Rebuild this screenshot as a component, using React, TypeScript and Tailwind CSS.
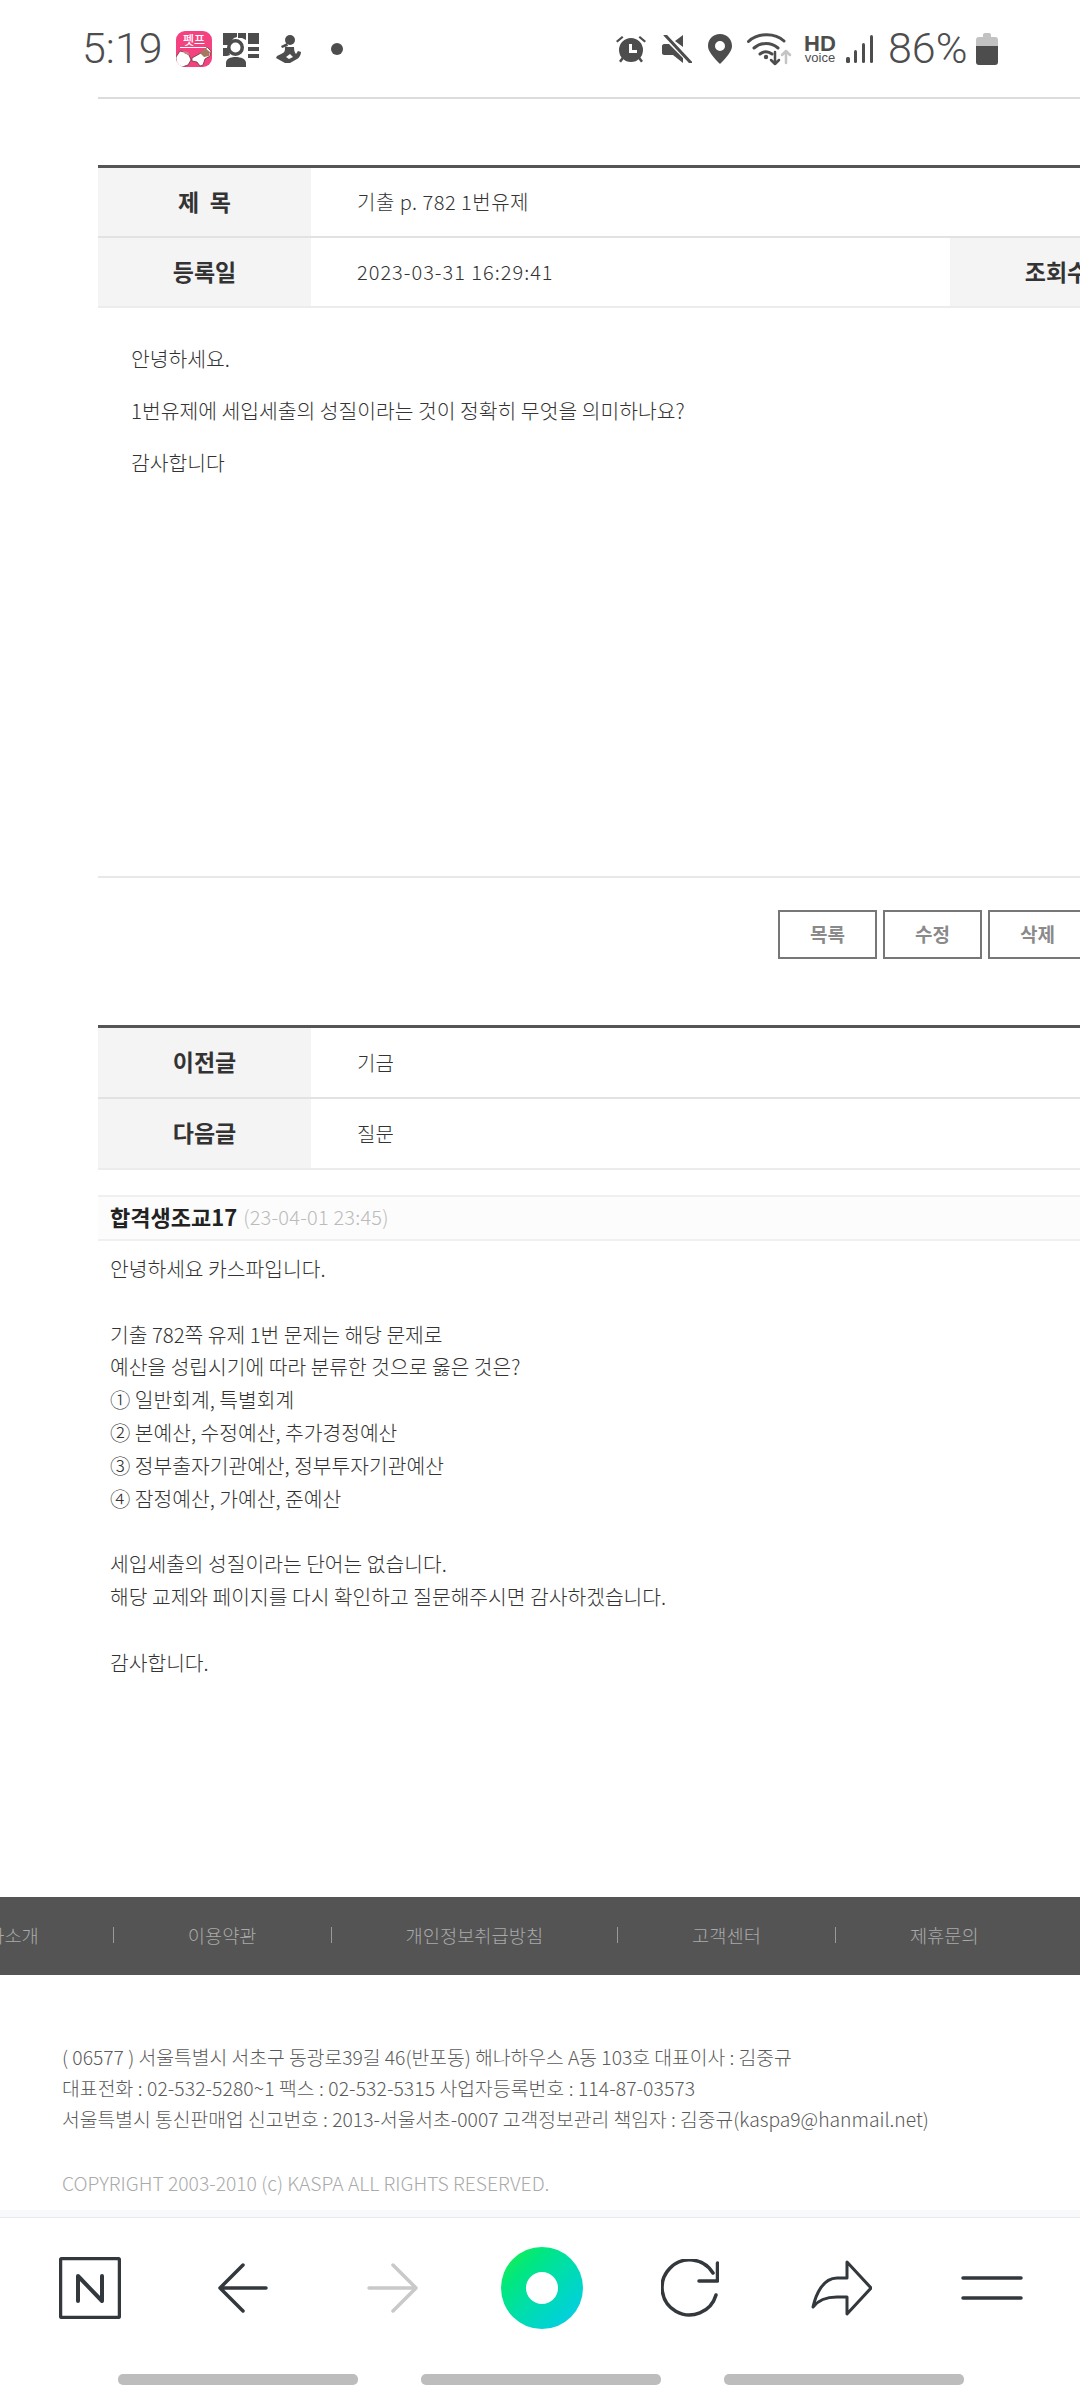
const kr = "font-['Noto_Sans_CJK_KR','Noto_Sans',sans-serif]";

const PetIcon = () => (
  <div className="relative w-[36px] h-[36px] rounded-[9px] overflow-hidden bg-[#f4417f] text-center">
    <div className={`${kr} text-[12px] leading-[14px] pt-[2px] font-medium text-white`}>펫프</div>
    <svg viewBox="0 0 36 36" className="absolute inset-0 w-[36px] h-[36px]">
      <path d="M4 16.5h28" stroke="#fff" strokeWidth="1" />
      <path d="M0 26l4-6 4 1 5 3 2 5-3 5-6 2-6-1z" fill="#fff" stroke="#5a2a2a" strokeWidth="0.7" />
      <path d="M7 20l5 1 2 3-5-1z" fill="#c98a86" />
      <path d="M16 27l9-5 4-3 2-3 4 4-1 5-5 3-2 6-3 1-3-4-5-1z" fill="#fff" stroke="#5a2a2a" strokeWidth="0.7" />
      <path d="M24 22l5-5 5 4-1 4-5 1z" fill="#a5785f" />
    </svg>
  </div>
);

const PhotoGridIcon = () => (
  <svg viewBox="0 0 36 34" className="w-[36px] h-[34px] ml-[11px] mt-[3px]" fill="#4d4d4d">
    <path d="M0 0h14v4l-3 1-4 4-1 3H0zM15 0h8v7l-4-2-4 0zM25 0h11v11H25zM0 15h5l1 4 1 3-3 1H0zM25 14h11v4H25zM25 21h11v4H25z" />
    <path fillRule="evenodd" d="M12.500 6a8.500 8.500 0 1 1 0 17 8.500 8.500 0 0 1 0-17zm0 3.500a5 5 0 1 0 0 10 5 5 0 0 0 0-10z" />
    <path d="M3 34v-4c0-4 4-6 9.500-6s10.500 2 10.500 6v4z" />
  </svg>
);

const YogaIcon = () => (
  <svg viewBox="0 0 26 28" className="w-[26px] h-[28px] ml-[17px] mt-[1px]" fill="#4d4d4d">
    <circle cx="14" cy="5" r="5" />
    <path d="M11 8L5 11l1 2 6-2z" />
    <path d="M9 12h9c0 4 1 6 2 7l2-3 3 1c0 3-2 6-4 7l-7 4H9l-9-5 1-2 6-3c2-1 2-3 2-6zm1 10l3 2 4-2-3-3z" fillRule="evenodd" />
  </svg>
);

const AlarmIcon = () => (
  <svg viewBox="0 0 30 28" className="w-[30px] h-[28px]" fill="#4d4d4d">
    <path d="M0 6l6-5 1.500 1.500-6 5zM30 6l-6-5-1.500 1.500 6 5z" />
    <path d="M3 26l3-4 2 1.500-3 4zM27 26l-3-4-2 1.500 3 4z" />
    <path fillRule="evenodd" d="M15 3a12 12 0 1 1 0 24 12 12 0 0 1 0-24zm-2 6v9h8v-3h-5V9z" />
  </svg>
);

const MuteIcon = () => (
  <svg viewBox="0 0 30 28" className="w-[30px] h-[28px] ml-[16px]" fill="#4d4d4d">
    <path d="M21 0v12L13 6zM0 11c0-1 1-2 2-2h5l14 14v5L11 20H2c-1 0-2-1-2-2z" />
    <path d="M3 0l26 28" stroke="#4d4d4d" strokeWidth="3" strokeLinecap="round" />
  </svg>
);

const PinIcon = () => (
  <svg viewBox="0 0 24 30" className="w-[24px] h-[30px] ml-[16px]" fill="#4d4d4d">
    <path fillRule="evenodd" d="M12 0c7 0 12 5 12 12 0 5-5 11-12 18C5 23 0 17 0 12 0 5 5 0 12 0zm0 7a5 5 0 1 0 0 10 5 5 0 0 0 0-10z" />
  </svg>
);

const WifiIcon = () => (
  <svg viewBox="0 0 46 34" className="w-[46px] h-[34px] ml-[15px]" fill="none">
    <path d="M1.500 9.500C11 .5 28 .5 37 9" stroke="#4d4d4d" strokeWidth="3" strokeLinecap="round" />
    <path d="M7 16c7-6 17-6 24 0" stroke="#4d4d4d" strokeWidth="3" strokeLinecap="round" />
    <path d="M13 22c4-3 8-3 12 0" stroke="#4d4d4d" strokeWidth="3" strokeLinecap="round" />
    <circle cx="19" cy="25" r="2.200" fill="#4d4d4d" />
    <path d="M28 20v12M24 28l4 4 4-4" stroke="#4d4d4d" strokeWidth="2.500" strokeLinecap="round" strokeLinejoin="round" />
    <path d="M39 31V19M35 23l4-4 4 4" stroke="#c4c4c4" strokeWidth="2.500" strokeLinecap="round" strokeLinejoin="round" />
  </svg>
);

const HdVoice = () => (
  <div className="ml-[11px] w-[32px] flex flex-col items-center font-['Liberation_Sans',sans-serif] text-[#4d4d4d]">
    <span className="text-[22px] leading-[17px] font-bold">HD</span>
    <span className="text-[13px] leading-[11px]">voice</span>
  </div>
);

const SignalIcon = () => (
  <svg viewBox="0 0 27 28" className="w-[27px] h-[28px] ml-[10px]" fill="#4d4d4d">
    <rect x="0" y="22" width="4" height="6" rx="1.500" />
    <rect x="8" y="15" width="3" height="13" rx="1.500" />
    <rect x="16" y="8" width="3" height="20" rx="1.500" />
    <rect x="24" y="0" width="3" height="28" rx="1.500" />
  </svg>
);

const BatteryIcon = () => (
  <svg viewBox="0 0 22 32" className="w-[22px] h-[32px] ml-[8px] mt-[1px]">
    <path d="M7 2c0-1 .5-2 2-2h4c1.500 0 2 1 2 2v2h4c2 0 3 1 3 3v6H0V7c0-2 1-3 3-3h4z" fill="#c2c2c2" />
    <path d="M0 13h22v16c0 2-1 3-3 3H3c-2 0-3-1-3-3z" fill="#4d4d4d" />
  </svg>
);

const StatusBar = () => (
  <div className="h-[97px] pl-[82px] flex items-center">
    <span className="font-['Roboto',sans-serif] font-light text-[43px] leading-none text-[#4d4d4d] w-[94px]">5:19</span>
    <PetIcon />
    <PhotoGridIcon />
    <YogaIcon />
    <span className="w-[12px] h-[12px] rounded-full bg-[#4d4d4d] ml-[29px]" />
    <span className="ml-[273px]" />
    <AlarmIcon />
    <MuteIcon />
    <PinIcon />
    <WifiIcon />
    <HdVoice />
    <SignalIcon />
    <span className="font-['Roboto',sans-serif] font-light text-[43px] leading-none text-[#4d4d4d] ml-[15px]">86%</span>
    <BatteryIcon />
  </div>
);

const Th = ({ children }: { children: string }) => (
  <div className="w-[213px] shrink-0 h-full pb-[2px] bg-[#f4f4f4] flex items-center justify-center whitespace-pre text-[23px] font-bold text-[#333]">
    {children}
  </div>
);

const NextRow = ({ label, value, last }: { label: string; value: string; last?: boolean }) => (
  <div className={`h-[71px] flex ${last ? "border-b-2 border-[#ececec]" : "border-b-2 border-[#e2e2e2]"}`}>
    <Th>{label}</Th>
    <div className="pl-[46px] flex items-center text-[20px] font-light text-[#333]">{value}</div>
  </div>
);

const Btn = ({ children }: { children: string }) => (
  <div className="w-[99px] h-[49px] border-2 border-[#777] flex items-center justify-center text-[19px] font-bold text-[#8a8a8a]">
    {children}
  </div>
);

const comment = [
  "안녕하세요 카스파입니다.",
  "",
  "기출 782쪽 유제 1번 문제는 해당 문제로",
  "예산을 성립시기에 따라 분류한 것으로 옳은 것은?",
  "① 일반회계, 특별회계",
  "② 본예산, 수정예산, 추가경정예산",
  "③ 정부출자기관예산, 정부투자기관예산",
  "④ 잠정예산, 가예산, 준예산",
  "",
  "세입세출의 성질이라는 단어는 없습니다.",
  "해당 교제와 페이지를 다시 확인하고 질문해주시면 감사하겠습니다.",
  "",
  "감사합니다.",
];

const navItems = ["회사소개", "이용약관", "개인정보취급방침", "고객센터", "제휴문의"];

const Toolbar = () => (
  <div className="h-[190px] bg-white">
    <div className="h-[8px] bg-[#f8f9fb] border-b border-[#e8eaee]" />
    <div className="h-[140px] flex items-center pl-[59px]">
      <svg viewBox="0 0 62 62" className="w-[62px] h-[62px]" fill="none" stroke="#33383d" strokeLinecap="round" strokeLinejoin="round">
        <rect x="1.500" y="1.500" width="59" height="59" rx="2" strokeWidth="3.500" />
        <path d="M19 44V19l24 25V19" strokeWidth="4" />
      </svg>
      <svg viewBox="0 0 50 50" className="w-[50px] h-[50px] ml-[97px]" fill="none" stroke="#33383d" strokeWidth="3.500" strokeLinecap="round" strokeLinejoin="round">
        <path d="M25 2L2 25l23 23M2 25h46" />
      </svg>
      <svg viewBox="0 0 51 50" className="w-[51px] h-[50px] ml-[99px]" fill="none" stroke="#c8c9ca" strokeWidth="3.500" strokeLinecap="round" strokeLinejoin="round">
        <path d="M26 2l23 23-23 23M49 25H2" />
      </svg>
      <div className="w-[82px] h-[82px] ml-[83px] rounded-full bg-gradient-to-br from-[#1cf02f] to-[#17c8f0] flex items-center justify-center">
        <div className="w-[32px] h-[32px] rounded-full bg-white" />
      </div>
      <svg viewBox="0 0 58 58" className="w-[58px] h-[58px] ml-[78px]" fill="none" stroke="#33383d" strokeWidth="3.500" strokeLinecap="round" strokeLinejoin="round">
        <path d="M55 36A27.500 27.500 0 1 1 52 14" />
        <path d="M56.500 4V22H38" />
      </svg>
      <svg viewBox="0 0 61 56" className="w-[61px] h-[56px] ml-[92px]" fill="none" stroke="#33383d" strokeWidth="3" strokeLinecap="round" strokeLinejoin="round">
        <path d="M36 2l24 26-24 26V37H26c-10 0-18 2-24 10 3-13 10-29 24-29h10z" />
      </svg>
      <svg viewBox="0 0 62 24" className="w-[62px] h-[24px] ml-[89px]" fill="none" stroke="#33383d" strokeWidth="3.500" strokeLinecap="round">
        <path d="M2 2h58M2 22h58" />
      </svg>
    </div>
    <div className="flex pl-[118px] gap-[63px] mt-[16px]">
      <div className="w-[240px] h-[11px] rounded-[5px] bg-[#bdbdbd]" />
      <div className="w-[240px] h-[11px] rounded-[5px] bg-[#bdbdbd]" />
      <div className="w-[240px] h-[11px] rounded-[5px] bg-[#bdbdbd]" />
    </div>
  </div>
);

export default function App() {
  return (
    <div className={`${kr} w-[1080px] h-[2400px] overflow-hidden bg-white flex flex-col`}>
      <StatusBar />
      <div className="ml-[98px] w-[1100px] h-[1800px] border-t-2 border-[#dcdcdc]">
        <div className="mt-[66px] border-t-[3px] border-[#555]">
          <div className="h-[70px] flex border-b-2 border-[#e2e2e2]">
            <Th>{"제  목"}</Th>
            <div className="pl-[46px] flex items-center text-[20px] tracking-[0.5px] font-light text-[#333]">기출 p. 782 1번유제</div>
          </div>
          <div className="h-[70px] flex border-b-2 border-[#ececec]">
            <Th>등록일</Th>
            <div className="w-[639px] pl-[46px] flex items-center text-[20px] tracking-[1px] font-light text-[#333]">2023-03-31 16:29:41</div>
            <Th>조회수</Th>
          </div>
        </div>
        <div className="h-[570px] pl-[33px] pt-[24px] border-b-2 border-[#e8e8e8] text-[20.4px] leading-[52px] font-light text-[#333]">
          <p>안녕하세요.</p>
          <p>1번유제에 세입세출의 성질이라는 것이 정확히 무엇을 의미하나요?</p>
          <p>감사합니다</p>
        </div>
        <div className="mt-[32px] ml-[680px] flex gap-[6px]">
          <Btn>목록</Btn>
          <Btn>수정</Btn>
          <Btn>삭제</Btn>
        </div>
        <div className="mt-[66px] border-t-[3px] border-[#555]">
          <NextRow label="이전글" value="기금" />
          <NextRow label="다음글" value="질문" last />
        </div>
        <div className="mt-[25px] h-[46px] pl-[12px] pb-[3px] flex items-center gap-[6px] bg-[#fcfcfc] border-y-2 border-[#f0f0f0]">
          <span className="text-[22px] font-bold text-[#222]">합격생조교17</span>
          <span className="text-[20px] tracking-[0.2px] font-light text-[#bbb]">(23-04-01 23:45)</span>
        </div>
        <div className="mt-[11px] pl-[12px] text-[20.35px] leading-[32.8px] font-light text-[#333]">
          {comment.map((line, i) => (
            <p key={i} className="h-[32.8px]">{line}</p>
          ))}
        </div>
      </div>
      <div className="h-[78px] pb-[2px] bg-[#545454] flex items-center -ml-[30px] w-[1140px] text-[18.7px] font-light text-[#aaa]">
        {navItems.map((item, i) => (
          <div key={item} className="flex items-center">
            {i > 0 && <span className="w-[1px] h-[16px] bg-[#999] mx-[74px]" />}
            <span className="whitespace-nowrap">{item}</span>
          </div>
        ))}
      </div>
      <div className="h-[235px] pl-[62px] pt-[67px] text-[19.3px] leading-[31px] font-light text-[#5a5a5a]">
        <p>( 06577 ) 서울특별시 서초구 동광로39길 46(반포동) 해나하우스 A동 103호 대표이사 : 김중규</p>
        <p className="tracking-[0.1px]">대표전화 : 02-532-5280~1 팩스 : 02-532-5315 사업자등록번호 : 114-87-03573</p>
        <p>서울특별시 통신판매업 신고번호 : 2013-서울서초-0007 고객정보관리 책임자 : 김중규(kaspa9@hanmail.net)</p>
        <p className="mt-[33px] text-[#aaa]">COPYRIGHT 2003-2010 (c) KASPA ALL RIGHTS RESERVED.</p>
      </div>
      <Toolbar />
    </div>
  );
}
